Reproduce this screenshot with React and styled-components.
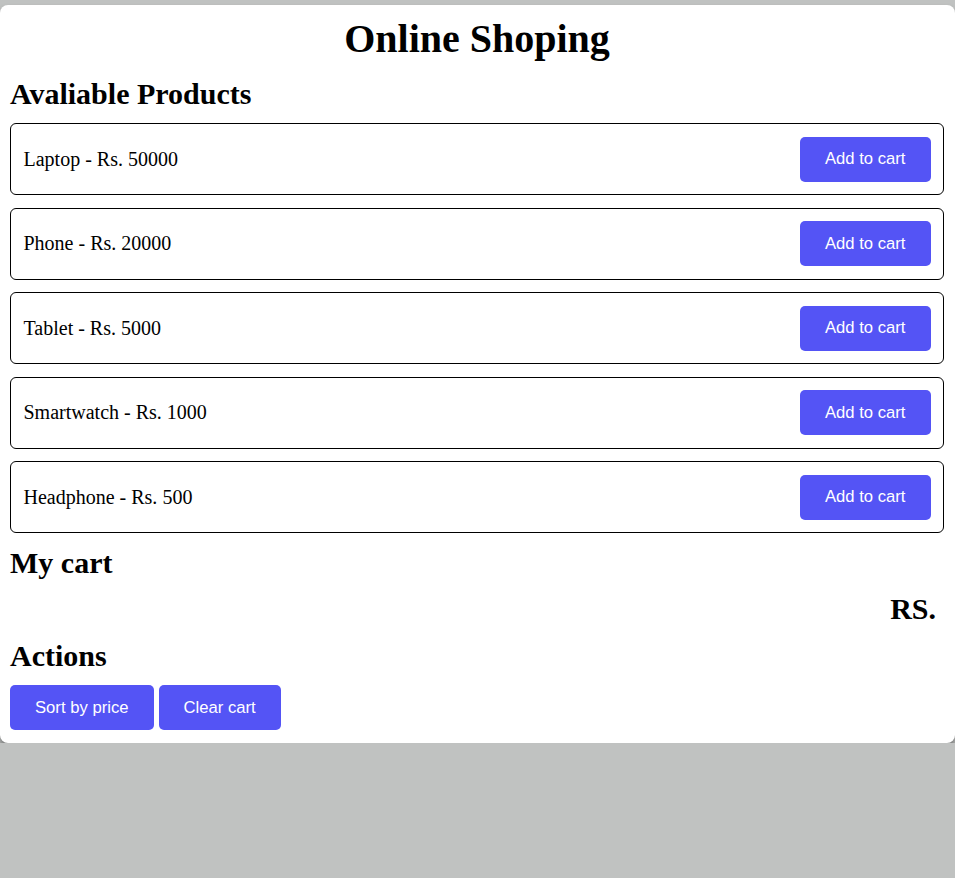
import React from 'react';
import styled, { createGlobalStyle } from 'styled-components';

const products = [
  { name: 'Laptop', price: 50000 },
  { name: 'Phone', price: 20000 },
  { name: 'Tablet', price: 5000 },
  { name: 'Smartwatch', price: 1000 },
  { name: 'Headphone', price: 500 },
];

const App = () => {
  return (
    <>
      <GlobalStyle />
      <Card>
        <Title>Online Shoping</Title>
        <Heading>Avaliable Products</Heading>
        {products.map((item) => (
          <ProductRow key={item.name}>
            <ProductText>
              {item.name} - Rs. {item.price}
            </ProductText>
            <Button>Add to cart</Button>
          </ProductRow>
        ))}
        <Heading>My cart</Heading>
        <Total>RS.</Total>
        <Heading>Actions</Heading>
        <Actions>
          <Button>Sort by price</Button>
          <Button>Clear cart</Button>
        </Actions>
      </Card>
    </>
  );
};

export default App;

const GlobalStyle = createGlobalStyle`
  body {
    margin: 0;
    background-color: #c0c2c1;
    font-family: "Liberation Serif", "Times New Roman", serif;
  }
`;

const Card = styled.div`
  margin-top: 5px;
  width: 100%;
  box-sizing: border-box;
  background-color: #fff;
  border-radius: 8px;
  box-shadow: 0 5px 6px rgba(0, 0, 0, 0.4);
  padding: 11px 11px 12.5px 10px;
  display: flex;
  flex-direction: column;
  gap: 12.5px;
`;

const Title = styled.h1`
  margin: 0 0 2px;
  font-size: 40px;
  line-height: 46px;
  font-weight: 700;
  text-align: center;
`;

const Heading = styled.h2`
  margin: 0;
  font-size: 30px;
  line-height: 34px;
  font-weight: 700;
`;

const ProductRow = styled.div`
  display: flex;
  justify-content: space-between;
  align-items: center;
  border: 1px solid #000;
  border-radius: 6px;
  padding: 12.5px;
`;

const ProductText = styled.p`
  margin: 0;
  font-size: 20px;
  line-height: 23px;
`;

const Total = styled.h2`
  margin: 0;
  padding-right: 8px;
  font-size: 30px;
  line-height: 34px;
  font-weight: 700;
  text-align: right;
`;

const Actions = styled.div`
  display: flex;
  gap: 5px;
`;

const Button = styled.button`
  font-family: "Liberation Sans", Arial, sans-serif;
  font-size: 16.67px;
  line-height: 20px;
  color: #fff;
  background-color: #5454f5;
  border: none;
  border-radius: 5px;
  padding: 12.5px 25px;
  cursor: pointer;
`;
